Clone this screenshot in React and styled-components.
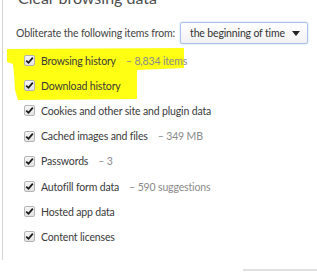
import styled, { createGlobalStyle } from 'styled-components'

const GlobalStyle = createGlobalStyle`
  html, body {
    margin: 0;
    padding: 0;
    background: #ffffff;
  }
  body {
    font-family: Lato, 'Noto Sans', sans-serif;
    color: #333333;
  }
`

const Page = styled.div`
  position: relative;
  width: 317px;
  height: 272px;
  overflow: hidden;
  background: #ffffff;
`

const Dialog = styled.div`
  position: relative;
  margin-left: 2px;
  height: 100%;
  border-left: 1px solid #d4d4d4;
  padding-left: 13px;
  box-sizing: border-box;
`

const Title = styled.h1`
  margin: -12px 0 0 2px;
  font-size: 16px;
  line-height: 20px;
  font-weight: 400;
  color: #4d4d4d;
`

const RangeRow = styled.div`
  display: flex;
  align-items: center;
  gap: 5px;
  margin-top: 14px;
  height: 22px;
`

const Label = styled.span`
  font-size: 10.5px;
  letter-spacing: -0.15px;
  color: #444444;
  white-space: nowrap;
`

const Select = styled.div`
  display: flex;
  align-items: center;
  justify-content: space-between;
  width: 128px;
  height: 22px;
  box-sizing: border-box;
  padding: 0 7px 0 9px;
  border: 1px solid #a9c1e6;
  border-radius: 2px;
  background: linear-gradient(#ffffff, #f1f1f1);
  box-shadow: 0 0 2px rgba(120, 160, 220, 0.5);
  font-size: 10.5px;
  letter-spacing: -0.15px;
  color: #333333;
  white-space: nowrap;
`

const Arrow = styled.span`
  width: 0;
  height: 0;
  border-left: 4px solid transparent;
  border-right: 4px solid transparent;
  border-top: 5px solid #222222;
`

const List = styled.div`
  position: relative;
  margin-top: 4px;
`

const Highlight = styled.svg`
  position: absolute;
  left: -16px;
  top: -48px;
  width: 317px;
  height: 272px;
  pointer-events: none;
  z-index: 0;
`

const Row = styled.label`
  position: relative;
  z-index: 1;
  display: flex;
  align-items: center;
  gap: 6px;
  height: 25.2px;
  padding-left: 8px;
  font-size: 10.5px;
  letter-spacing: -0.15px;
  white-space: nowrap;
`

const Box = styled.span`
  display: flex;
  align-items: center;
  justify-content: center;
  width: 11px;
  height: 11px;
  border: 1px solid #b4b4b4;
  border-radius: 2px;
  background: linear-gradient(#f6f6f6, #e2e2e2);
  box-sizing: border-box;
`

const Name = styled.span`
  color: #3a3a3a;
`

const Extra = styled.span`
  color: #8a8a8a;
  margin-left: 4px;
`

const Footer = styled.div`
  position: absolute;
  left: 243px;
  right: 0;
  top: 269px;
  height: 2px;
  background: #e0e0e0;
`

const Check = () => (
  <svg width="9" height="9" viewBox="0 0 9 9">
    <path d="M1.2 4.6 L3.5 6.8 L7.8 1.6" fill="none" stroke="#1a1a1a" strokeWidth="1.8" />
  </svg>
)

const items = [
  { name: 'Browsing history', extra: '8,834 items' },
  { name: 'Download history' },
  { name: 'Cookies and other site and plugin data' },
  { name: 'Cached images and files', extra: '349 MB' },
  { name: 'Passwords', extra: '3' },
  { name: 'Autofill form data', extra: '590 suggestions' },
  { name: 'Hosted app data' },
  { name: 'Content licenses' },
]

const App = () => (
  <Page>
    <GlobalStyle />
    <Dialog>
      <Title>Clear browsing data</Title>
      <RangeRow>
        <Label>Obliterate the following items from:</Label>
        <Select>
          the beginning of time
          <Arrow />
        </Select>
      </RangeRow>
      <List>
        <Highlight viewBox="0 0 317 272">
          <polygon
            points="7,49 184,48 184,68 137,70 137,74 14,74 13,64 7,62"
            fill="#ffff14"
          />
          <polygon points="14,73 137,73 137,99 18,100 15,90" fill="#ffff14" />
        </Highlight>
        {items.map((item) => (
          <Row key={item.name}>
            <Box>
              <Check />
            </Box>
            <Name>{item.name}</Name>
            {item.extra && <Extra>– {item.extra}</Extra>}
          </Row>
        ))}
      </List>
    </Dialog>
    <Footer />
  </Page>
)

export default App
